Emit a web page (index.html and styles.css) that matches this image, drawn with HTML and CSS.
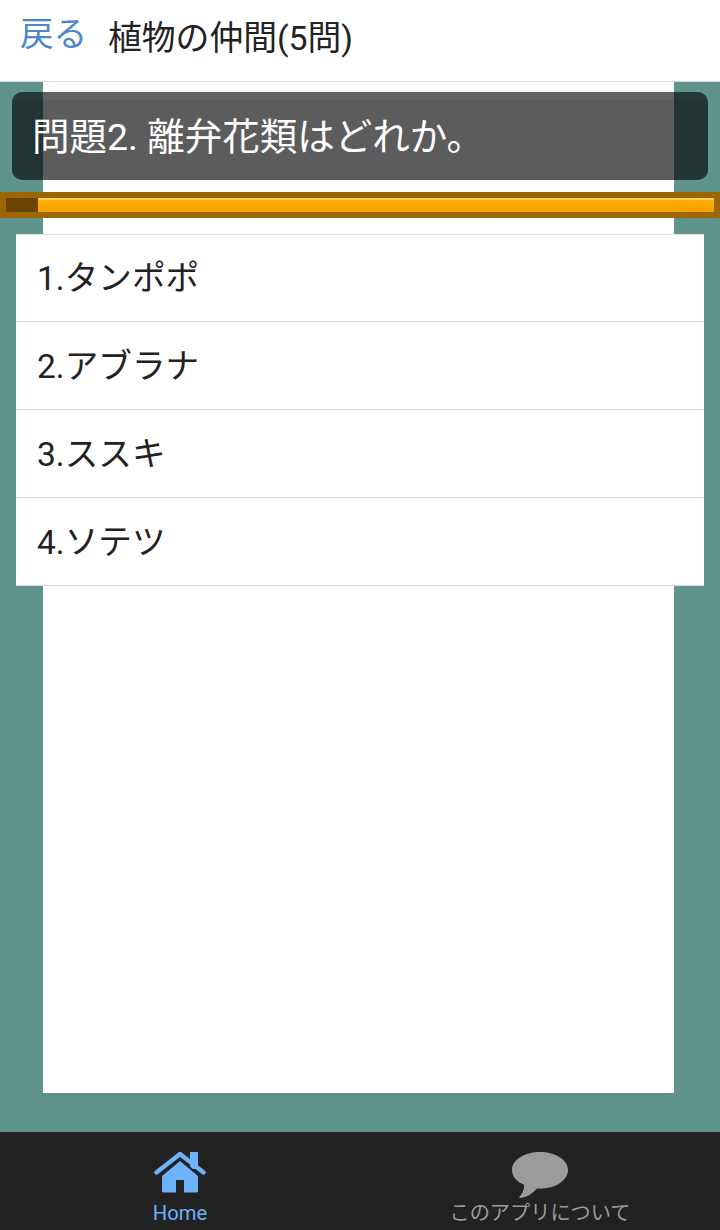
FILE: index.html
```html
<!DOCTYPE html>
<html lang="ja">
<head>
  <meta charset="utf-8">
  <title>植物の仲間(5問)</title>
  <link rel="stylesheet" href="styles.css">
</head>
<body>
  <header class="top-bar">
    <a class="back-link" href="#">戻る</a>
    <h1 class="page-title">植物の仲間(5問)</h1>
  </header>

  <main class="content">
    <div class="question">問題2. 離弁花類はどれか。</div>

    <div class="progress">
      <div class="progress-done"></div>
      <div class="progress-left"></div>
    </div>

    <ul class="answers">
      <li>1.タンポポ</li>
      <li>2.アブラナ</li>
      <li>3.ススキ</li>
      <li>4.ソテツ</li>
    </ul>
  </main>

  <footer class="tab-bar">
    <a class="tab tab-active" href="#">
      <svg class="tab-icon" width="52" height="42" viewBox="0 0 52 42">
        <path fill="#6eb2fb" d="M36 1h8v17h-8z"/>
        <path fill="none" stroke="#6eb2fb" stroke-width="4.4" stroke-linecap="round" stroke-linejoin="round" d="M2.500 21.500L26 3L49.500 21.500"/>
        <path fill="#6eb2fb" d="M8 25L26 10L44 25V40a1.500 1.500 0 0 1-1.500 1.500H30V29H22V41.500H9.500A1.500 1.500 0 0 1 8 40z"/>
        <path fill="none" stroke="#222" stroke-width="1.600" d="M6 25L26 8L46 25"/>
      </svg>
      <span class="tab-label">Home</span>
    </a>
    <a class="tab" href="#">
      <svg class="tab-icon" width="58" height="48" viewBox="0 0 58 48">
        <path fill="#9b9b9b" d="M29 1C13.500 1 1 8.800 1 19c0 6.500 4.800 11.800 12 14.800c.6 4.200-1.200 8-4.400 11.900c-.6.900 0 1.500 1 1.300c7.200-1 12-4.600 16.400-9.400c1 .1 2 .1 3 .1C44.500 37.700 57 29.200 57 19S44.500 1 29 1z"/>
      </svg>
      <span class="tab-label">このアプリについて</span>
    </a>
  </footer>
</body>
</html>
```

FILE: styles.css
```css
html, body {
  margin: 0;
  padding: 0;
}
body {
  width: 720px;
  height: 1230px;
  display: flex;
  flex-direction: column;
  overflow: hidden;
  font-family: Roboto, "Noto Sans CJK JP", sans-serif;
  background-color: #5e948c;
}

/* header */
.top-bar {
  height: 81px;
  flex: none;
  display: flex;
  align-items: center;
  padding-left: 20px;
  background-color: #fff;
  border-bottom: 1px solid #dcdcdc;
}
.back-link {
  width: 89px;
  margin-top: -19px;
  color: #4a86c8;
  font-size: 33.600px;
  text-decoration: none;
}
.page-title {
  margin: -10px 0 0 -1px;
  color: #222;
  font-size: 33.800px;
  font-weight: normal;
}

/* main area */
.content {
  flex: 1;
  position: relative;
  padding-top: 10px;
}
.content::before {
  content: "";
  position: absolute;
  top: 0;
  left: 43px;
  width: 631px;
  height: 1011px;
  background-color: #fff;
}
.question {
  position: relative;
  height: 88px;
  margin: 0 12px;
  padding-left: 20px;
  border-radius: 10px;
  background: linear-gradient(rgba(0, 0, 0, 0.61) 8px, rgba(0, 0, 0, 0.64) 8px);
  color: #fff;
  font-size: 37.500px;
  line-height: 90px;
}

/* progress bar */
.progress {
  position: relative;
  display: flex;
  height: 14px;
  margin-top: 12px;
  border: 6px solid #9c6600;
  background-color: #6a4400;
}
.progress-done {
  width: 32px;
}
.progress-left {
  flex: 1;
  background: linear-gradient(#ffd060 0, #ffd060 2px, #ffb000 2px, #f59f00 100%);
}

/* answers */
.answers {
  position: relative;
  margin: 16px 16px 0;
  padding: 0;
  list-style: none;
  background-color: #fff;
  box-shadow: inset 0 1px #e0e0e0;
}
.answers li {
  height: 87px;
  padding-left: 21px;
  border-bottom: 1px solid #d9d9d9;
  color: #222;
  font-size: 33.600px;
  line-height: 89px;
}

/* footer tabs */
.tab-bar {
  height: 98px;
  flex: none;
  display: flex;
  background-color: #222;
}
.tab {
  flex: 1;
  display: flex;
  flex-direction: column;
  align-items: center;
  padding-top: 19px;
  color: #9b9b9b;
  font-size: 20.200px;
  text-decoration: none;
}
.tab-active {
  color: #6eb2fb;
}
.tab-icon {
  display: block;
}
.tab-label {
  margin-top: auto;
  height: 31px;
  line-height: 28px;
}
```
